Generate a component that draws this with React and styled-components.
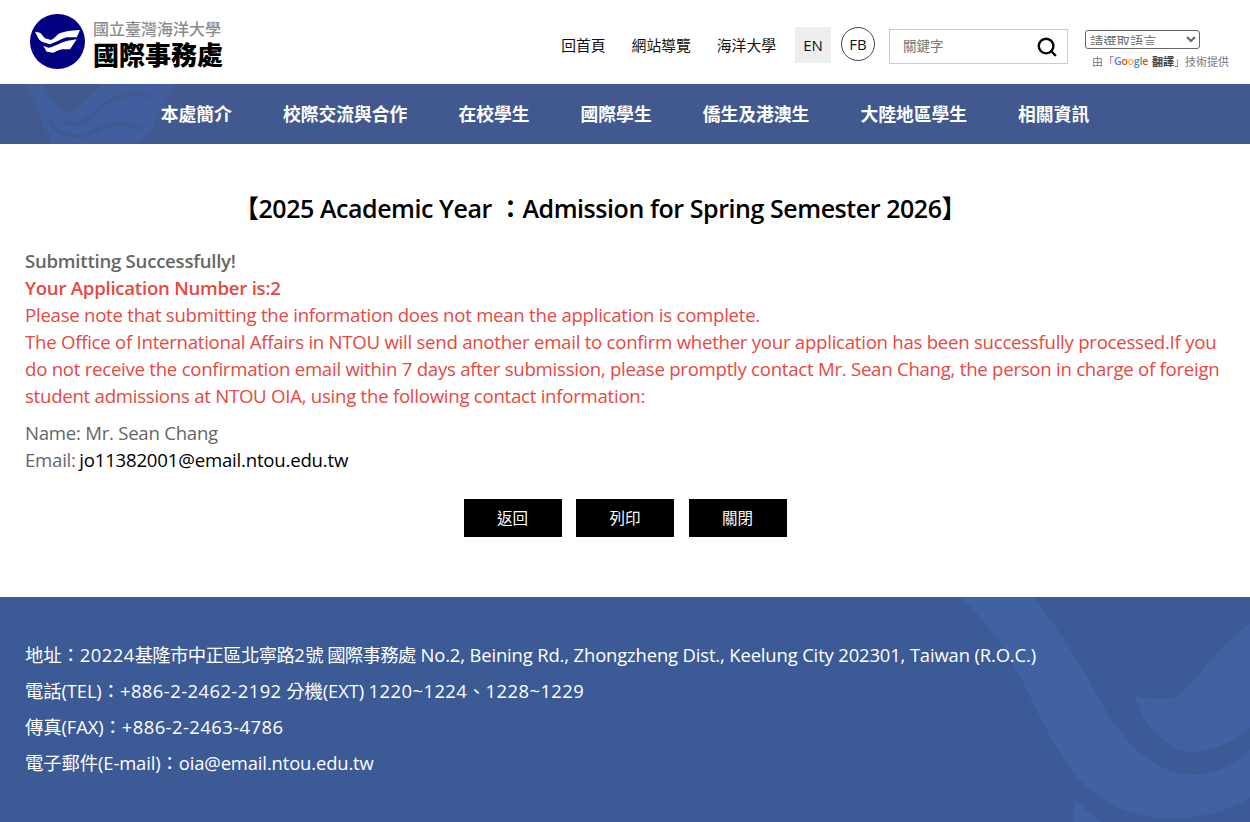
import styled, { createGlobalStyle } from "styled-components";
import { FiSearch } from "react-icons/fi";

const GlobalStyle = createGlobalStyle`
    html, body {
        margin: 0;
        padding: 0;
        background: #fff;
        font-family: "Open Sans", "Noto Sans CJK TC", sans-serif;
    }
`;

const Header = styled.header`
    display: flex;
    justify-content: space-between;
    align-items: flex-start;
    height: 84px;
    padding: 14px 20px 0 30px;
    box-sizing: border-box;
`;

const Brand = styled.a`
    display: flex;
    align-items: center;
    gap: 8px;
    height: 55px;
`;

const BrandText = styled.div`
    display: flex;
    flex-direction: column;
    padding-top: 2px;
    font-family: "Noto Sans CJK TC", sans-serif;
`;

const BrandSchool = styled.span`
    font-size: 16px;
    line-height: 22px;
    color: #8c8c8c;
    font-weight: 500;
`;

const BrandOffice = styled.span`
    font-size: 26px;
    line-height: 30px;
    color: #000;
    font-weight: 900;
`;

const TopBar = styled.div`
    display: flex;
    align-items: flex-start;
`;

const TopLink = styled.a`
    font-family: "Noto Sans CJK TC", sans-serif;
    font-size: 14.8px;
    line-height: 36px;
    margin-top: 13px;
    margin-right: ${(p) => p.$gap}px;
    color: #111;
`;

const LangBox = styled.a`
    width: 36px;
    height: 36px;
    margin-top: 13px;
    background: #eee;
    display: flex;
    align-items: center;
    justify-content: center;
    font-size: 15px;
    color: #111;
`;

const FbCircle = styled.a`
    width: 34px;
    height: 34px;
    margin: 13px 14px 0 10px;
    border: 1px solid #444;
    border-radius: 50%;
    box-sizing: border-box;
    display: flex;
    align-items: center;
    justify-content: center;
    font-size: 15px;
    color: #111;
`;

const SearchBox = styled.div`
    width: 179px;
    height: 35px;
    margin-top: 15px;
    border: 1px solid #ccc;
    box-sizing: border-box;
    display: flex;
    align-items: center;
    justify-content: space-between;
    padding: 0 9px 0 13px;
    font-family: "Noto Sans CJK TC", sans-serif;
    font-size: 13.5px;
    line-height: 31px;
    color: #777;
`;

const SearchLabel = styled.span`
    margin-top: -2px;
`;

const TranslateBox = styled.div`
    margin: 16px 0 0 17px;
    width: 145px;
`;

const LangSelect = styled.select`
    display: block;
    width: 115px;
    height: 19px;
    padding: 0 0 3px;
    font-family: "Noto Sans CJK TC", sans-serif;
    font-size: 13.3px;
    color: #666;
    background: #fff;
    border: 1px solid #666;
    border-radius: 3px;
`;

const PoweredBy = styled.div`
    display: flex;
    align-items: center;
    margin: 3px 0 0 7px;
    font-family: "Noto Sans CJK TC", sans-serif;
    font-size: 11px;
    line-height: 18px;
    color: #777;
    white-space: nowrap;
`;

const GoogleWord = styled.span`
    font-family: "Open Sans", sans-serif;
    font-size: 10.5px;
    font-weight: 600;
    letter-spacing: -0.2px;
`;

const Letter = styled.span`
    color: ${(p) => p.$color};
`;

const Translate = styled.b`
    color: #444;
    margin: 0 0 0 4px;
`;

const Nav = styled.nav`
    position: relative;
    overflow: hidden;
    height: 60px;
    padding-bottom: 2px;
    box-sizing: border-box;
    background: #42598f;
    display: flex;
    justify-content: center;
    align-items: center;
    gap: 51px;
`;

const NavWave = styled.svg`
    position: absolute;
    left: 0;
    top: 0;
    width: 240px;
    height: 60px;
`;

const NavItem = styled.a`
    position: relative;
    font-family: "Noto Sans CJK TC", sans-serif;
    font-size: 17.8px;
    font-weight: 700;
    color: #fff;
`;

const Main = styled.main`
    padding: 45px 25px 0;
    height: 453px;
    box-sizing: border-box;
`;

const Title = styled.h2`
    margin: 0 0 20px;
    padding-right: 50px;
    text-align: center;
    font-size: 25px;
    line-height: 38px;
    font-weight: 600;
    letter-spacing: -0.44px;
    color: #000;
`;

const Para = styled.p`
    margin: 0 0 ${(p) => p.$after || 0}px;
    font-size: 18.6px;
    line-height: 27px;
    letter-spacing: -0.25px;
    font-weight: ${(p) => (p.$bold ? 600 : 400)};
    color: ${(p) => (p.$red ? "#e8483f" : "#666")};
`;

const Mail = styled.span`
    margin-left: -1px;
    color: #000;
    letter-spacing: -0.2px;
`;

const ButtonRow = styled.div`
    display: flex;
    justify-content: center;
    gap: 14.5px;
    margin-top: 26px;
`;

const ActionButton = styled.button`
    width: 98px;
    height: 38px;
    padding: 0 0 2px;
    border: 0;
    background: #000;
    color: #fff;
    font-family: "Noto Sans CJK TC", sans-serif;
    font-size: 15.5px;
`;

const Footer = styled.footer`
    position: relative;
    overflow: hidden;
    height: 225px;
    background: #3c5a96;
    padding: 40px 25px 0;
    box-sizing: border-box;
`;

const FooterWave = styled.svg`
    position: absolute;
    right: 0;
    top: 0;
    width: 350px;
    height: 225px;
`;

const FooterLine = styled.div`
    position: relative;
    font-size: 18.4px;
    line-height: 36px;
    letter-spacing: -0.13px;
    color: #fff;
    white-space: nowrap;
`;

const Nums = styled.span`
    letter-spacing: 0.45px;
`;

const Han = styled.span`
    letter-spacing: -0.65px;
`;

function Logo() {
    return (
        <svg width="55" height="55" viewBox="0 0 55 55">
            <circle cx="27.5" cy="27.5" r="27.5" fill="#000080" />
            <path d="M5 17.7 L10 18.7 C12 20 13 23 15 24.3 L21 26 C23.5 25 26 22 28.3 20 C32 18 36 17.5 40 16.7 L50 16 L46.7 23.3 L36.7 23.3 C33 24 31 25.5 28.3 26.7 L20 30.3 L13.3 28.3 C11 27.5 9 26 8.3 24.3 Z" fill="#fff" />
            <path d="M13.3 31.7 L18.3 33.7 C22 33.5 25 31.5 28.3 30.3 C31 28.5 34 27.5 37.7 26.7 L46.7 25.3 L40 35.3 L31.7 35.3 C28.5 36 26 37.5 23.3 38.7 L16.7 37.7 Z" fill="#fff" />
        </svg>
    );
}

function App() {
    return (
        <>
            <GlobalStyle />
            <Header>
                <Brand>
                    <Logo />
                    <BrandText>
                        <BrandSchool>國立臺灣海洋大學</BrandSchool>
                        <BrandOffice>國際事務處</BrandOffice>
                    </BrandText>
                </Brand>
                <TopBar>
                    <TopLink $gap={26}>回首頁</TopLink>
                    <TopLink $gap={26}>網站導覽</TopLink>
                    <TopLink $gap={19}>海洋大學</TopLink>
                    <LangBox>EN</LangBox>
                    <FbCircle>FB</FbCircle>
                    <SearchBox>
                        <SearchLabel>關鍵字</SearchLabel>
                        <FiSearch size={22} color="#000" strokeWidth={2.6} />
                    </SearchBox>
                    <TranslateBox>
                        <LangSelect defaultValue="">
                            <option value="">請選取語言</option>
                        </LangSelect>
                        <PoweredBy>
                            由「
                            <GoogleWord>
                                <Letter $color="#4285f4">G</Letter>
                                <Letter $color="#ea4335">o</Letter>
                                <Letter $color="#fbbc05">o</Letter>
                                <Letter $color="#4285f4">g</Letter>
                                <Letter $color="#34a853">l</Letter>
                                <Letter $color="#ea4335">e</Letter>
                            </GoogleWord>
                            <Translate>翻譯</Translate>」技術提供
                        </PoweredBy>
                    </TranslateBox>
                </TopBar>
            </Header>

            <Nav>
                <NavWave viewBox="0 0 720 180">
                    <path d="M75 0 H125 C145 30 165 70 190 80 C205 90 225 85 240 70 C265 45 290 20 310 0 H525 L455 135 L415 180 H148 L145 150 C115 100 100 40 75 0 Z" fill="#415f9f" />
                    <path d="M195 112 C235 135 265 105 300 72 C340 35 395 15 455 42" fill="none" stroke="#42598f" strokeWidth="13" />
                    <path d="M145 112 C180 155 235 170 290 140 C335 112 375 112 425 138" fill="none" stroke="#42598f" strokeWidth="13" />
                </NavWave>
                <NavItem>本處簡介</NavItem>
                <NavItem>校際交流與合作</NavItem>
                <NavItem>在校學生</NavItem>
                <NavItem>國際學生</NavItem>
                <NavItem>僑生及港澳生</NavItem>
                <NavItem>大陸地區學生</NavItem>
                <NavItem>相關資訊</NavItem>
            </Nav>

            <Main>
                <Title>【2025 Academic Year ：Admission for Spring Semester 2026】</Title>
                <Para $bold>Submitting Successfully!</Para>
                <Para $bold $red>Your Application Number is:2</Para>
                <Para $red>Please note that submitting the information does not mean the application is complete.</Para>
                <Para $red $after={10}>
                    The Office of International Affairs in NTOU will send another email to confirm whether your application has been successfully processed.If you do not receive the confirmation email within 7 days after submission, please promptly contact Mr. Sean Chang, the person in charge of foreign student admissions at NTOU OIA, using the following contact information:
                </Para>
                <Para>Name: Mr. Sean Chang</Para>
                <Para>Email: <Mail>jo11382001@email.ntou.edu.tw</Mail></Para>
                <ButtonRow>
                    <ActionButton>返回</ActionButton>
                    <ActionButton>列印</ActionButton>
                    <ActionButton>關閉</ActionButton>
                </ButtonRow>
            </Main>

            <Footer>
                <FooterWave viewBox="0 21 1050 675">
                    <path d="M180 21 H400 C470 110 520 190 560 260 C600 330 620 370 650 410 C700 480 780 555 880 555 C950 555 1000 520 1050 480 V620 C1000 655 930 685 800 685 C700 685 600 640 530 560 C470 490 420 380 360 260 C310 170 250 80 180 21 Z" fill="#4062a2" />
                    <path d="M705 320 C750 328 790 328 820 325 C835 322 850 305 860 295 C890 262 920 225 950 190 C985 155 1020 125 1050 100 V415 C1020 445 960 475 880 487 C840 487 790 460 750 410 C730 385 715 350 705 320 Z" fill="#4062a2" />
                    <path d="M525 625 C545 650 575 675 600 696 H517 Z" fill="#4062a2" />
                </FooterWave>
                <FooterLine>地址：<Nums>20224</Nums><Han>基隆市中正區北寧路</Han><Nums>2</Nums><Han>號 國際事務處</Han> No.2, Beining Rd., Zhongzheng Dist., Keelung City 202301, Taiwan (R.O.C.)</FooterLine>
                <FooterLine>電話(TEL)：<Nums>+886-2-2462-2192</Nums> 分機(EXT) <Nums>1220~1224</Nums>、<Nums>1228~1229</Nums></FooterLine>
                <FooterLine>傳真(FAX)：<Nums>+886-2-2463-4786</Nums></FooterLine>
                <FooterLine>電子郵件(E-mail)：oia@email.ntou.edu.tw</FooterLine>
            </Footer>
        </>
    );
}

export default App;
